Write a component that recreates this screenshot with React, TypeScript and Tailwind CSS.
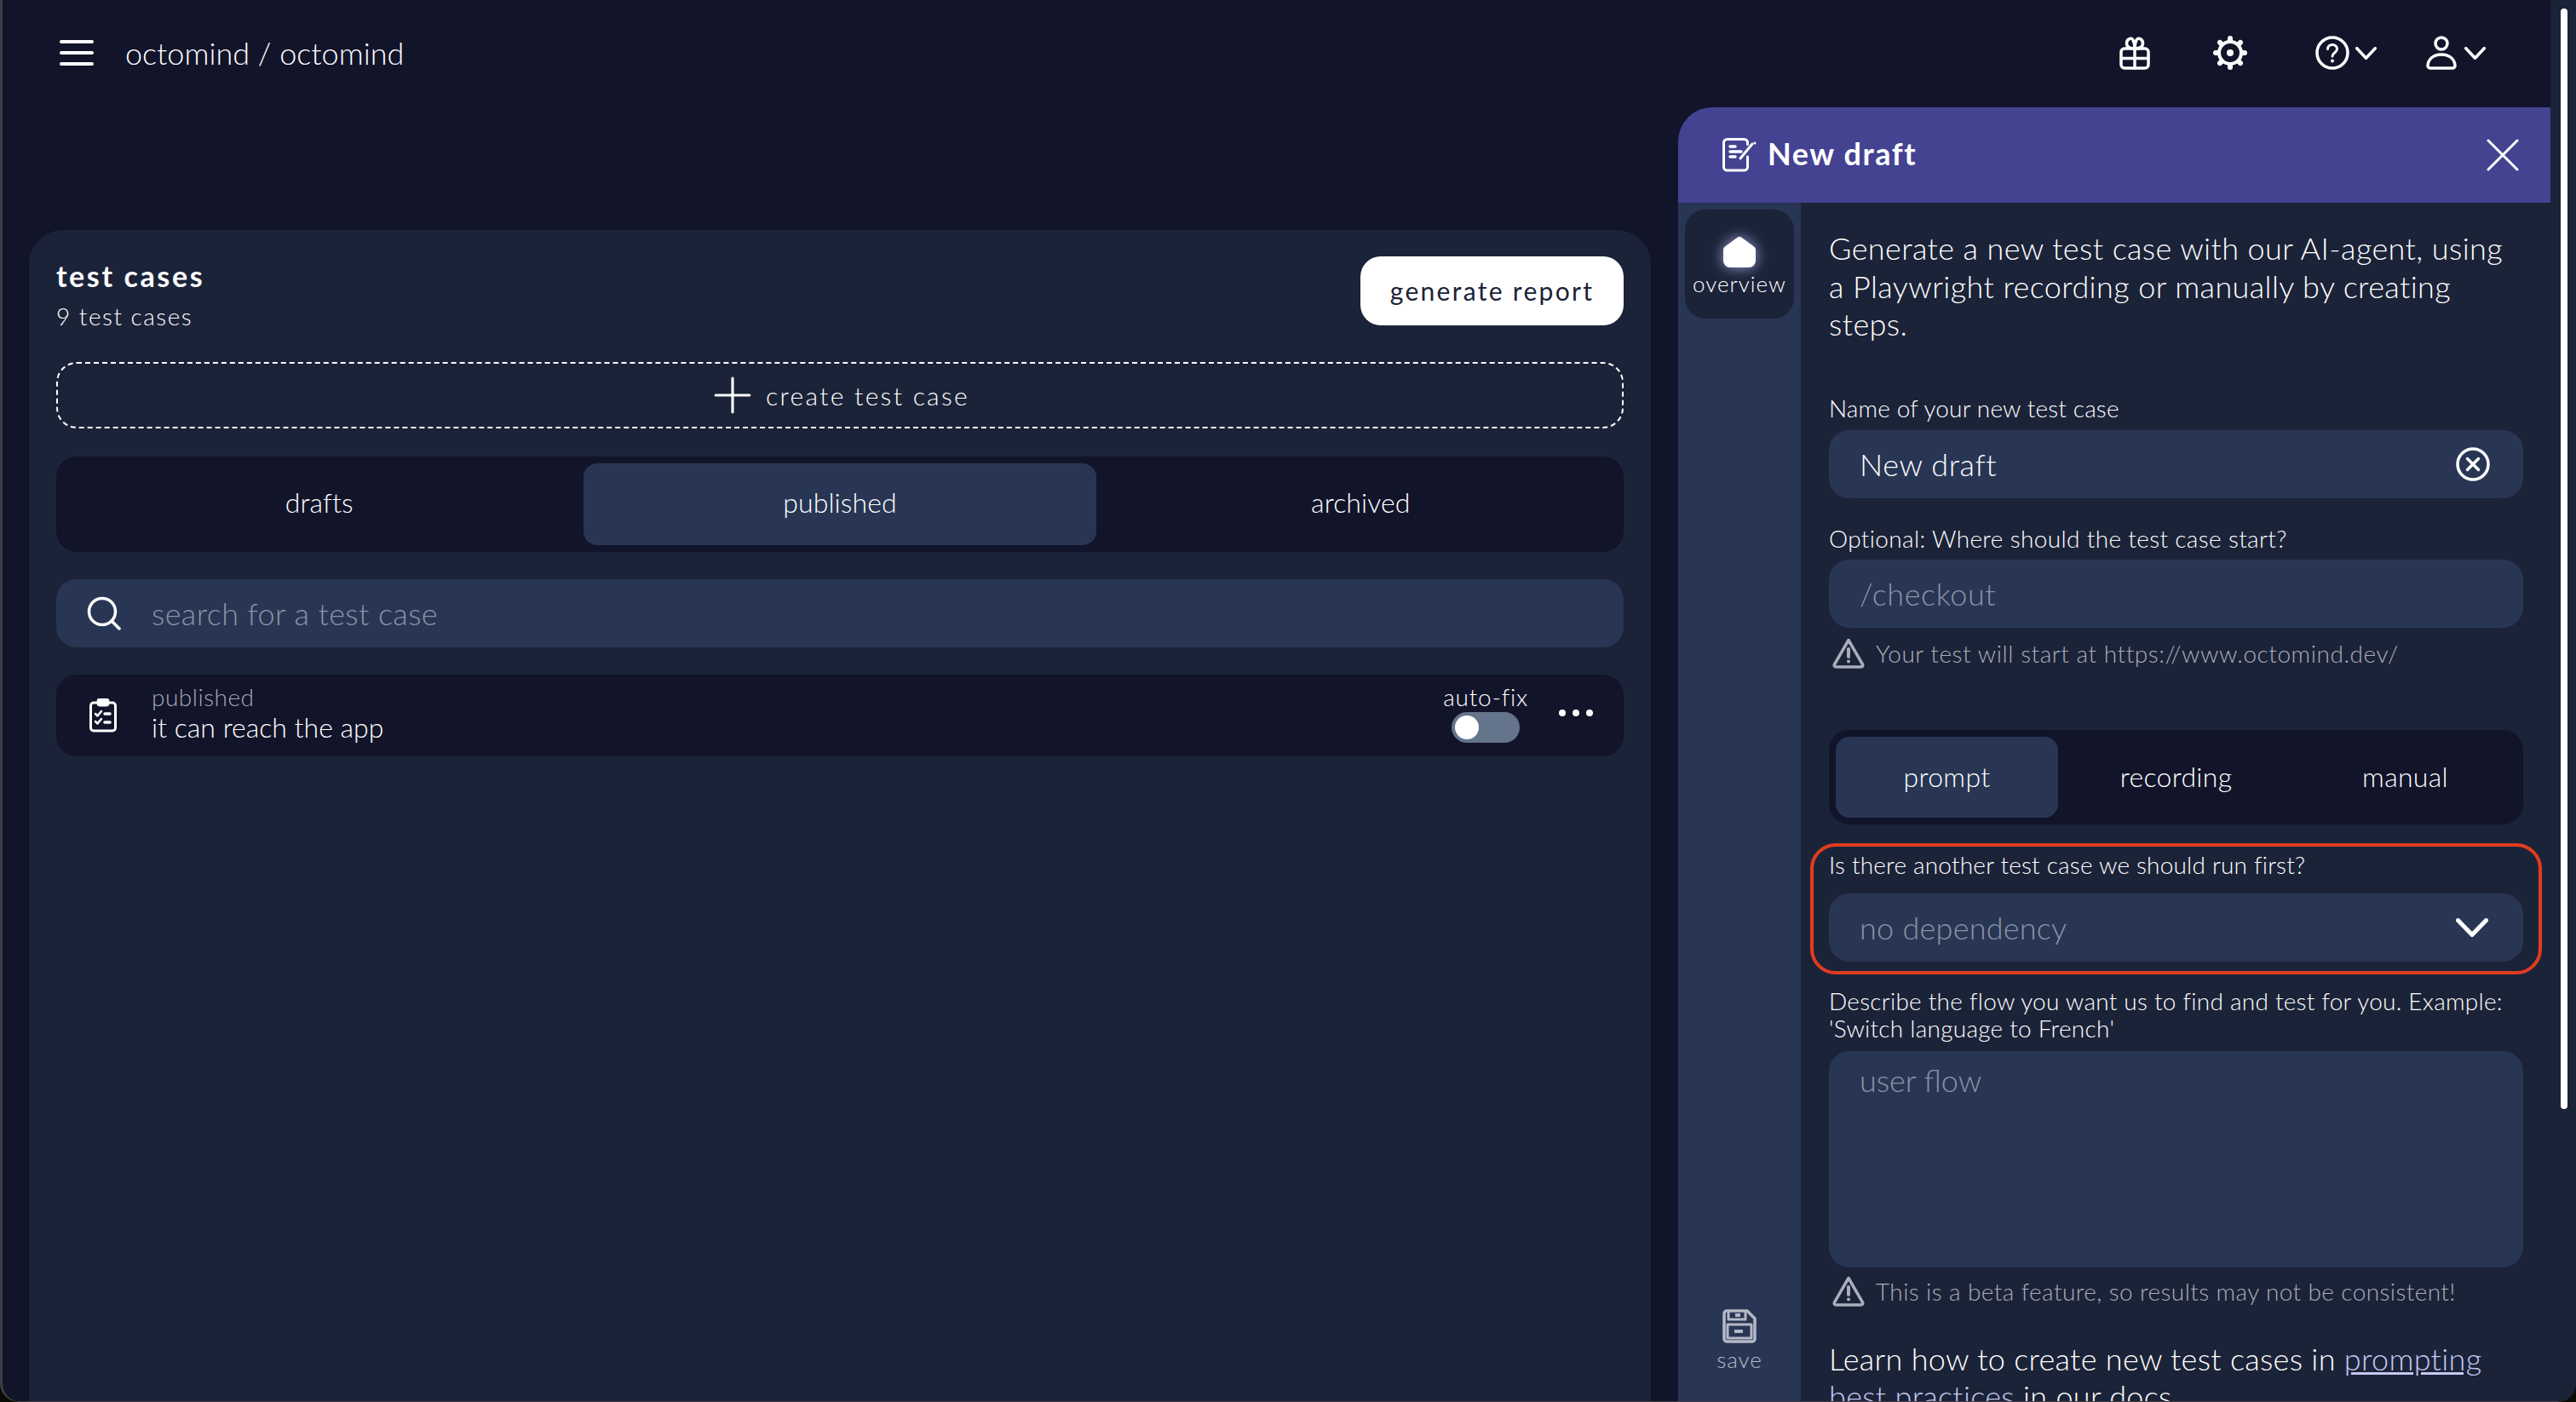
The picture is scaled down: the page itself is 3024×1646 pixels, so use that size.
import { Plus } from "lucide-react"

function Gift() {
  return (
    <svg width="36" height="40" viewBox="0 0 36 40" fill="none" stroke="white" strokeWidth="3.5" strokeLinecap="round" strokeLinejoin="round">
      <rect x="2" y="15" width="32" height="23" rx="4" />
      <path d="M18 15v23M2 26.500h32" />
      <path d="M18 15c-3 0-9 0-9.500-5.500C8 4 14 1 16 5c1.500 3 2 6 2 10zM18 15c3 0 9 0 9.500-5.500C28 4 22 1 20 5c-1.500 3-2 6-2 10z" />
    </svg>
  )
}

function Gear() {
  const angles = [0, 45, 90, 135, 180, 225, 270, 315]
  return (
    <svg width="40" height="40" viewBox="0 0 40 40" fill="none" stroke="white" strokeLinecap="round">
      {angles.map(a => (
        <path key={a} d="M20 5.500V3" strokeWidth="6" transform={`rotate(${a} 20 20)`} />
      ))}
      <circle cx="20" cy="20" r="13" strokeWidth="4" />
      <circle cx="20" cy="20" r="4" fill="white" stroke="none" />
    </svg>
  )
}

function Help() {
  return (
    <svg width="40" height="40" viewBox="0 0 40 40" fill="none" stroke="white" strokeWidth="3.500" strokeLinecap="round">
      <circle cx="20" cy="20" r="18" />
      <path d="M14.500 15.500c0-3 2.500-5 5.500-5s5.500 2 5.500 5c0 4.500-5.500 4.500-5.500 8.500" strokeWidth="3" />
      <circle cx="20" cy="29.500" r="2" fill="white" stroke="none" />
    </svg>
  )
}

function User() {
  return (
    <svg width="36" height="40" viewBox="0 0 36 40" fill="none" stroke="white" strokeWidth="3.500" strokeLinecap="round" strokeLinejoin="round">
      <circle cx="18" cy="9" r="7" />
      <path d="M5 38h26c1.500 0 3-1 3-3-.5-8-7-13-16-13S2.500 27 2 35c0 2 1.500 3 3 3z" />
    </svg>
  )
}

function Chevron({ w = 25, h = 15, sw = 3.5 }: { w?: number; h?: number; sw?: number }) {
  return (
    <svg width={w} height={h} viewBox={`0 0 ${w} ${h}`} fill="none" stroke="white" strokeWidth={sw} strokeLinecap="round" strokeLinejoin="round">
      <path d={`M${sw / 2} ${sw / 2}L${w / 2} ${h - sw / 2}L${w - sw / 2} ${sw / 2}`} />
    </svg>
  )
}

function Hamburger() {
  return (
    <svg width="40" height="32" viewBox="0 0 40 32" stroke="white" strokeWidth="4" strokeLinecap="round">
      <path d="M2 3h36M2 16h36M2 29h36" />
    </svg>
  )
}

function Search() {
  return (
    <svg width="40" height="40" viewBox="0 0 40 40" fill="none" stroke="white" strokeWidth="3.500" strokeLinecap="round">
      <circle cx="18" cy="18" r="15.500" />
      <path d="M29 29l9 9" />
    </svg>
  )
}

function Clipboard() {
  return (
    <svg width="32" height="40" viewBox="0 0 32 40" fill="none" stroke="white" strokeWidth="3" strokeLinecap="round" strokeLinejoin="round">
      <path d="M8 5H5a3.500 3.500 0 0 0-3.500 3.500v26A3.500 3.500 0 0 0 5 38h22a3.500 3.500 0 0 0 3.500-3.500v-26A3.500 3.500 0 0 0 27 5h-3" />
      <rect x="10" y="1" width="12" height="7" rx="2.500" fill="white" />
      <path d="M7 18l2.500 2.500L14 15M7 27l2.500 2.500L14 24" strokeWidth="2.500" />
      <path d="M18 18h6M18 28h6" strokeWidth="3.500" />
    </svg>
  )
}

function Warning() {
  return (
    <svg width="38" height="36" viewBox="0 0 38 36" fill="none" stroke="#a9aebb" strokeWidth="3.500" strokeLinecap="round" strokeLinejoin="round">
      <path d="M19 2.500L2.500 31c-.7 1.500 0 3 2 3h29c2 0 2.700-1.500 2-3z" />
      <path d="M19 13v9" strokeWidth="4" />
      <circle cx="19" cy="27.500" r="2" fill="#a9aebb" stroke="none" />
    </svg>
  )
}

function Draft() {
  return (
    <svg width="40" height="40" viewBox="0 0 40 40" fill="none" stroke="white" strokeWidth="3" strokeLinecap="round" strokeLinejoin="round">
      <path d="M29.500 22v12a4 4 0 0 1-4 4h-20a4 4 0 0 1-4-4V5.500a4 4 0 0 1 4-4h20a4 4 0 0 1 4 4v2" />
      <path d="M9 10h6M9 16h13M9 22h6" strokeWidth="3.500" />
      <path d="M21 24L35 7" />
      <circle cx="38" cy="6" r="1.500" fill="white" stroke="none" />
    </svg>
  )
}

function Close() {
  return (
    <svg width="38" height="38" viewBox="0 0 38 38" stroke="white" strokeWidth="3" strokeLinecap="round">
      <path d="M2 2l34 34M36 2L2 36" />
    </svg>
  )
}

function ClearCircle() {
  return (
    <svg width="40" height="40" viewBox="0 0 40 40" fill="none" stroke="white" strokeWidth="3.500" strokeLinecap="round">
      <circle cx="20" cy="20" r="18" />
      <path d="M13.500 13.500l13 13M26.500 13.500l-13 13" />
    </svg>
  )
}

function Home() {
  return (
    <svg width="40" height="38" viewBox="0 0 40 38" className="drop-shadow-[0_0_8px_rgba(190,190,255,0.8)]">
      <path d="M20 5L5 16v13a4 4 0 0 0 4 4h22a4 4 0 0 0 4-4V16z" fill="white" stroke="white" strokeWidth="8" strokeLinejoin="round" />
    </svg>
  )
}

function Save() {
  return (
    <svg width="40" height="40" viewBox="0 0 40 40" fill="none" stroke="#b4b9c6" strokeWidth="3.500" strokeLinejoin="round">
      <path d="M5 2h24l9 9v24a3 3 0 0 1-3 3H5a3 3 0 0 1-3-3V5a3 3 0 0 1 3-3z" />
      <path d="M7 2v10h20V2" strokeWidth="3" />
      <rect x="6" y="18" width="28" height="16" strokeWidth="3" />
      <path d="M14 26h10M15 7h6" strokeWidth="4" />
    </svg>
  )
}

const field = "h-[80px] w-full rounded-[24px] bg-[#283654] px-[36px] text-[36px] tracking-[0.6px] text-white outline-none placeholder:text-[#8b93a6]"

export default function App() {
  return (
    <div className="h-[1646px] w-[3024px] bg-[#0b0b06] font-light [font-family:Lato,sans-serif]">
      <div className="flex h-[1646px] overflow-hidden rounded-b-[22px] border-b border-l-[3px] border-[#3d3e46] bg-[#12142a] text-white">
        <div className="flex min-w-0 flex-1 flex-col">
          <header className="flex h-[126px] shrink-0 items-center pb-[2px] pl-[67px] pr-[76px]">
            <Hamburger />
            <span className="ml-[37px] text-[36px] tracking-[0px]">octomind / octomind</span>
            <div className="ml-auto flex items-center">
              <Gift />
              <span className="ml-[74px]"><Gear /></span>
              <span className="ml-[80px]"><Help /></span>
              <span className="ml-[7px]"><Chevron /></span>
              <span className="ml-[58px]"><User /></span>
              <span className="ml-[9px]"><Chevron /></span>
            </div>
          </header>

          <div className="flex min-h-0 flex-1">
            <div className="min-w-0 flex-1 pl-[31px] pr-[32px] pt-[144px]">
              <section className="h-[1400px] rounded-t-[40px] bg-[#1b2338] px-[32px] pt-[31px]">
                <div className="flex h-[81px] justify-between">
                  <div className="pt-[7px]">
                    <h1 className="text-[34px] font-bold leading-[32px] tracking-[2.6px]">test cases</h1>
                    <p className="mt-[15px] text-[28px] leading-[32px] tracking-[1.5px]">9 test cases</p>
                  </div>
                  <button className="h-[81px] w-[309px] rounded-[24px] bg-white text-[30px] font-normal tracking-[2.3px] text-[#1b2338]">generate report</button>
                </div>

                <button className="mt-[43px] flex h-[78px] w-full items-center justify-center rounded-[24px] border-2 border-dashed border-white pr-[8px] text-[30px] tracking-[2.3px]">
                  <Plus size={68} strokeWidth={1.1} className="-my-[10px] mr-[5px]" />
                  create test case
                </button>

                <div className="mt-[33px] flex h-[112px] gap-[10px] rounded-[24px] bg-[#12142a] p-[8px] text-[32px] tracking-[0.1px]">
                  <div className="flex flex-1 items-center justify-center rounded-[16px] pb-[4px]">drafts</div>
                  <div className="flex flex-1 items-center justify-center rounded-[16px] bg-[#283654] pb-[4px]">published</div>
                  <div className="flex flex-1 items-center justify-center rounded-[16px] pb-[4px]">archived</div>
                </div>

                <div className="mt-[32px] flex h-[80px] items-center rounded-[24px] bg-[#283654] pl-[36px]">
                  <Search />
                  <input placeholder="search for a test case" className="ml-[36px] flex-1 bg-transparent text-[36px] tracking-[0.4px] text-white outline-none placeholder:text-[#8b93a6]" />
                </div>

                <div className="mt-[32px] flex h-[96px] items-center rounded-[24px] bg-[#12142a] pl-[39px] pr-[36px]">
                  <Clipboard />
                  <div className="mb-[8px] ml-[41px] flex-1">
                    <p className="text-[28px] leading-[36px] tracking-[0.5px] text-[#a3a8b5]">published</p>
                    <p className="text-[32px] leading-[36px] tracking-[0px]">it can reach the app</p>
                  </div>
                  <div className="mb-[6px] flex flex-col items-center">
                    <span className="text-[28px] leading-[30px] tracking-[0.8px]">auto-fix</span>
                    <div className="mt-[3px] flex h-[36px] w-[80px] items-center rounded-full bg-[#64748b] pl-[4px]">
                      <div className="h-[28px] w-[28px] rounded-full bg-white" />
                    </div>
                  </div>
                  <div className="mb-[6px] ml-[36px] flex gap-[8px]">
                    <div className="h-[8px] w-[8px] rounded-full bg-white" />
                    <div className="h-[8px] w-[8px] rounded-full bg-white" />
                    <div className="h-[8px] w-[8px] rounded-full bg-white" />
                  </div>
                </div>
              </section>
            </div>

            <aside className="flex w-[1024px] shrink-0 flex-col overflow-hidden rounded-tl-[40px] bg-[#1b2338]">
              <div className="flex h-[112px] shrink-0 items-center bg-[#434392] pl-[52px] pr-[37px]">
                <Draft />
                <h2 className="mb-[4px] ml-[13px] text-[36px] font-bold tracking-[1.6px]">New draft</h2>
                <span className="ml-auto"><Close /></span>
              </div>

              <div className="flex min-h-0 flex-1">
                <nav className="flex w-[144px] shrink-0 flex-col items-center bg-[#283654] pb-[33px] pt-[8px]">
                  <div className="flex h-[128px] w-[128px] flex-col items-center rounded-[24px] bg-[#1b2338] pt-[31px]">
                    <Home />
                    <span className="mt-[2px] text-[26px] leading-[32px] tracking-[1px]">overview</span>
                  </div>
                  <div className="mt-auto flex flex-col items-center text-[#b4b9c6]">
                    <Save />
                    <span className="mt-[3px] text-[26px] leading-[32px] tracking-[1px]">save</span>
                  </div>
                </nav>

                <div className="ml-[33px] w-[815px] shrink-0 pt-[31px]">
                  <p className="text-[36px] leading-[44.5px] tracking-[0.4px]">Generate a new test case with our AI-agent, using a Playwright recording or manually by creating steps.</p>

                  <label className="mb-[10px] mt-[60px] block text-[28px] leading-[32px] tracking-[0.15px]">Name of your new test case</label>
                  <div className="relative">
                    <input readOnly value="New draft" className={field} />
                    <span className="absolute right-[39px] top-[20px]"><ClearCircle /></span>
                  </div>

                  <label className="mb-[9px] mt-[31px] block text-[28px] leading-[32px] tracking-[0.35px]">Optional: Where should the test case start?</label>
                  <input placeholder="/checkout" className={field} />
                  <div className="mt-[12px] flex h-[36px] items-center pl-[4px]">
                    <Warning />
                    <span className="ml-[13px] text-[28px] tracking-[0.55px] text-[#a9aebb]">Your test will start at https://www.octomind.dev/</span>
                  </div>

                  <div className="mt-[72px] flex h-[111px] gap-[8px] rounded-[24px] bg-[#12142a] p-[8px] text-[32px] tracking-[0.3px]">
                    <div className="flex flex-1 items-center justify-center rounded-[16px] bg-[#283654]">prompt</div>
                    <div className="flex flex-1 items-center justify-center rounded-[16px]">recording</div>
                    <div className="flex flex-1 items-center justify-center rounded-[16px]">manual</div>
                  </div>

                  <div className="relative mt-[31px]">
                    <div className="absolute -bottom-[15px] -left-[22px] -right-[22px] -top-[9px] rounded-[30px] border-4 border-[#e03c20]" />
                    <label className="block text-[28px] leading-[32px] tracking-[0.2px]">Is there another test case we should run first?</label>
                    <div className="mt-[18px] flex h-[80px] items-center justify-between rounded-[24px] bg-[#283654] pl-[36px] pr-[41px] text-[36px] tracking-[0.25px] text-[#8b93a6]">
                      no dependency
                      <Chevron w={38} h={22} sw={5} />
                    </div>
                  </div>

                  <label className="mb-[11px] mt-[30px] block text-[28px] leading-[32px] tracking-[0.25px]">Describe the flow you want us to find and test for you. Example: 'Switch language to French'</label>
                  <textarea placeholder="user flow" className="block h-[254px] w-full resize-none rounded-[24px] bg-[#283654] px-[36px] pt-[7px] text-[36px] tracking-[0px] text-white outline-none placeholder:text-[#8b93a6]" />
                  <div className="mt-[10px] flex h-[36px] items-center pl-[4px]">
                    <Warning />
                    <span className="ml-[13px] text-[28px] tracking-[0.4px] text-[#a9aebb]">This is a beta feature, so results may not be consistent!</span>
                  </div>

                  <p className="mt-[39px] text-[36px] leading-[44.5px] tracking-[0.3px]">
                    Learn how to create new test cases in <a className="text-[#c6c8f2] underline">prompting best practices</a> in our docs.
                  </p>
                </div>
              </div>
            </aside>
          </div>
        </div>

        <div className="w-[30px] shrink-0 bg-[#1b2338] pl-[12px] pt-[10px]">
          <div className="h-[1292px] w-[8px] rounded-full bg-white" />
        </div>
      </div>
    </div>
  )
}
